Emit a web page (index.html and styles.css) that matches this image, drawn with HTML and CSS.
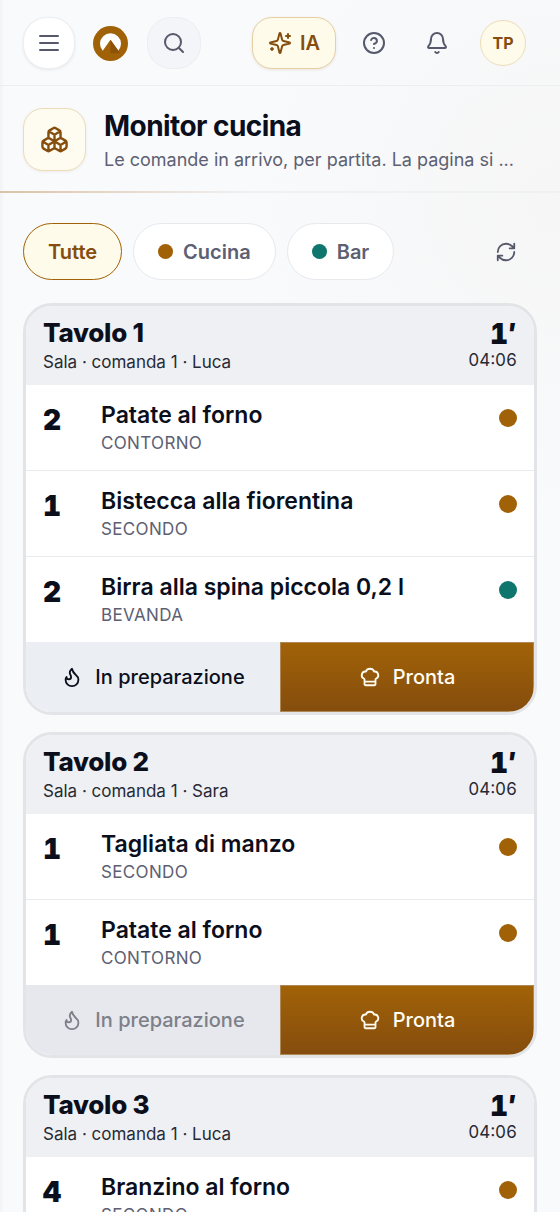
FILE: index.html
```html
<!DOCTYPE html>
<html lang="it">
<head>
<meta charset="utf-8">
<meta name="viewport" content="width=device-width, initial-scale=1">
<title>Monitor cucina</title>
<link rel="stylesheet" href="styles.css">
</head>
<body>
<svg class="sprite" aria-hidden="true">
  <symbol id="i-menu" viewBox="0 0 24 24"><path d="M3 5h18M3 12h18M3 19h18"/></symbol>
  <symbol id="i-search" viewBox="0 0 24 24"><circle cx="11" cy="11" r="8"/><path d="m21 21-4.3-4.3"/></symbol>
  <symbol id="i-sparkles" viewBox="0 0 24 24"><path d="M9.94 15.5A2 2 0 0 0 8.5 14.06l-6.14-1.58a.5.5 0 0 1 0-.96L8.5 9.94A2 2 0 0 0 9.94 8.5l1.58-6.14a.5.5 0 0 1 .96 0l1.58 6.14a2 2 0 0 0 1.44 1.44l6.14 1.58a.5.5 0 0 1 0 .96l-6.14 1.58a2 2 0 0 0-1.44 1.44l-1.58 6.14a.5.5 0 0 1-.96 0zM20 3v4M22 5h-4M4 17v2M5 18H3"/></symbol>
  <symbol id="i-help" viewBox="0 0 24 24"><circle cx="12" cy="12" r="10"/><path d="M9.09 9a3 3 0 0 1 5.83 1c0 2-3 3-3 3M12 17h.01"/></symbol>
  <symbol id="i-bell" viewBox="0 0 24 24"><path d="M10.27 21a2 2 0 0 0 3.46 0M3.26 15.33A1 1 0 0 0 4 17h16a1 1 0 0 0 .74-1.67C19.41 13.96 18 12.5 18 8A6 6 0 0 0 6 8c0 4.5-1.41 5.96-2.74 7.33"/></symbol>
  <symbol id="i-boxes" viewBox="0 0 24 24"><path d="M2.97 12.92A2 2 0 0 0 2 14.63v3.24a2 2 0 0 0 .97 1.71l3 1.8a2 2 0 0 0 2.06 0L12 19v-5.5l-5-3-4.03 2.42ZM7 16.5l-4.74-2.85M7 16.5l5-3M7 16.5v5.17M12 13.5V19l3.97 2.38a2 2 0 0 0 2.06 0l3-1.8a2 2 0 0 0 .97-1.71v-3.24a2 2 0 0 0-.97-1.71L17 10.5l-5 3ZM17 16.5l-5-3M17 16.5l4.74-2.85M17 16.5v5.17M7.97 4.42A2 2 0 0 0 7 6.13v4.37l5 3 5-3V6.13a2 2 0 0 0-.97-1.71l-3-1.8a2 2 0 0 0-2.06 0l-3 1.8ZM12 8 7.26 5.15M12 8l4.74-2.85M12 13.5V8"/></symbol>
  <symbol id="i-refresh" viewBox="0 0 24 24"><path d="M3 12a9 9 0 0 1 9-9 9.75 9.75 0 0 1 6.74 2.74L21 8M21 3v5h-5M21 12a9 9 0 0 1-9 9 9.75 9.75 0 0 1-6.74-2.74L3 16M8 16H3v5"/></symbol>
  <symbol id="i-flame" viewBox="0 0 24 24"><path d="M8.5 14.5A2.5 2.5 0 0 0 11 12c0-1.38-.5-2-1-3-1.07-2.14-.22-4.05 2-6 .5 2.5 2 4.9 4 6.5s3 3.5 3 5.5a7 7 0 1 1-14 0c0-1.15.43-2.29 1-3a2.5 2.5 0 0 0 2.5 2.5z"/></symbol>
  <symbol id="i-chef" viewBox="0 0 24 24"><path d="M17 21a1 1 0 0 0 1-1v-5.35c0-.46.32-.84.73-1.04a4 4 0 0 0-2.13-7.59 5 5 0 0 0-9.2 0 4 4 0 0 0-2.13 7.59c.41.2.73.58.73 1.04V20a1 1 0 0 0 1 1ZM6 17h12"/></symbol>
</svg>

<header class="topbar">
  <button class="round-btn menu" type="button" aria-label="Menu"><svg class="icon"><use href="#i-menu"/></svg></button>
  <a class="logo" href="#" aria-label="Home">
    <svg viewBox="0 0 36 36"><circle cx="18" cy="18" r="18" fill="#a16207"/><path d="M10 25.5a10.8 10.8 0 1 1 16 0L18 14.2Z" fill="#fff"/><path d="M18 14.2 28 28H18Z" fill="#8c5208"/></svg>
  </a>
  <button class="round-btn search" type="button" aria-label="Cerca"><svg class="icon"><use href="#i-search"/></svg></button>
  <div class="tools">
    <button class="ai-btn" type="button"><svg class="icon"><use href="#i-sparkles"/></svg>IA</button>
    <button class="plain-btn" type="button" aria-label="Aiuto"><svg class="icon"><use href="#i-help"/></svg></button>
    <button class="plain-btn" type="button" aria-label="Notifiche"><svg class="icon"><use href="#i-bell"/></svg></button>
    <button class="avatar" type="button">TP</button>
  </div>
</header>

<section class="page-head">
  <div class="tile"><svg class="icon"><use href="#i-boxes"/></svg></div>
  <div class="page-text">
    <h1>Monitor cucina</h1>
    <p>Le comande in arrivo, per partita. La pagina si ...</p>
  </div>
</section>

<main>
  <nav class="filters" aria-label="Partite">
    <button class="pill active" type="button">Tutte</button>
    <button class="pill" type="button"><span class="dot"></span>Cucina</button>
    <button class="pill" type="button"><span class="dot bar"></span>Bar</button>
    <button class="refresh" type="button" aria-label="Aggiorna"><svg class="icon"><use href="#i-refresh"/></svg></button>
  </nav>

  <article class="card">
    <header class="card-head">
      <div><h2>Tavolo 1</h2><p>Sala · comanda 1 · Luca</p></div>
      <div class="timer"><strong>1′</strong><time>04:06</time></div>
    </header>
    <ul>
      <li><span class="qty">2</span><div class="item"><h3>Patate al forno</h3><p>CONTORNO</p></div><span class="dot"></span></li>
      <li><span class="qty">1</span><div class="item"><h3>Bistecca alla fiorentina</h3><p>SECONDO</p></div><span class="dot"></span></li>
      <li><span class="qty">2</span><div class="item"><h3>Birra alla spina piccola 0,2 l</h3><p>BEVANDA</p></div><span class="dot bar"></span></li>
    </ul>
    <footer class="actions">
      <button class="prep" type="button"><svg class="icon"><use href="#i-flame"/></svg>In preparazione</button>
      <button class="ready" type="button"><svg class="icon"><use href="#i-chef"/></svg>Pronta</button>
    </footer>
  </article>

  <article class="card">
    <header class="card-head">
      <div><h2>Tavolo 2</h2><p>Sala · comanda 1 · Sara</p></div>
      <div class="timer"><strong>1′</strong><time>04:06</time></div>
    </header>
    <ul>
      <li><span class="qty">1</span><div class="item"><h3>Tagliata di manzo</h3><p>SECONDO</p></div><span class="dot"></span></li>
      <li><span class="qty">1</span><div class="item"><h3>Patate al forno</h3><p>CONTORNO</p></div><span class="dot"></span></li>
    </ul>
    <footer class="actions">
      <button class="prep" type="button" disabled><svg class="icon"><use href="#i-flame"/></svg>In preparazione</button>
      <button class="ready" type="button"><svg class="icon"><use href="#i-chef"/></svg>Pronta</button>
    </footer>
  </article>

  <article class="card">
    <header class="card-head">
      <div><h2>Tavolo 3</h2><p>Sala · comanda 1 · Luca</p></div>
      <div class="timer"><strong>1′</strong><time>04:06</time></div>
    </header>
    <ul>
      <li><span class="qty">4</span><div class="item"><h3>Branzino al forno</h3><p>SECONDO</p></div><span class="dot"></span></li>
    </ul>
    <footer class="actions">
      <button class="prep" type="button"><svg class="icon"><use href="#i-flame"/></svg>In preparazione</button>
      <button class="ready" type="button"><svg class="icon"><use href="#i-chef"/></svg>Pronta</button>
    </footer>
  </article>
</main>
</body>
</html>
```
FILE: styles.css
```css
* { box-sizing: border-box; margin: 0; padding: 0; }

html { scrollbar-width: none; }

body {
  font-family: Inter, "Liberation Sans", sans-serif;
  color: #0b0f1c;
  background:
    linear-gradient(90deg, #f2f3f5, rgba(242, 243, 245, 0) 4px),
    radial-gradient(circle at 100% 200px, #f6f6f6 0, rgba(246, 246, 246, 0) 320px),
    #f9fafc;
}

button { font: inherit; color: inherit; background: none; border: 0; cursor: pointer; }
button:disabled { cursor: default; }

.sprite { position: absolute; width: 0; height: 0; }

.icon {
  flex: none;
  width: 24px;
  height: 24px;
  fill: none;
  stroke: currentColor;
  stroke-width: 2;
  stroke-linecap: round;
  stroke-linejoin: round;
}

.topbar {
  display: flex;
  align-items: center;
  padding: 17px 34px 16px 23px;
  border-bottom: 1px solid #eceef1;
  color: #56596b;
}

.round-btn {
  display: grid;
  place-items: center;
  width: 52px;
  height: 52px;
  border: 1px solid #eceef2;
  border-radius: 24px;
}
.menu { background: #fff; box-shadow: 0 1px 3px rgba(15, 23, 42, .08); }
.search { width: 54px; background: #f4f5f9; }

.logo { width: 35px; height: 35px; margin: 0 19px 0 18px; }
.logo svg { display: block; width: 100%; height: 100%; }

.tools { display: flex; align-items: center; margin-left: auto; }

.ai-btn {
  display: flex;
  align-items: center;
  gap: 8px;
  height: 52px;
  padding: 0 15px;
  border: 1px solid #e6cfa5;
  border-radius: 20px;
  background: #fefbea;
  color: #854d0e;
  font-size: 20px;
  font-weight: 600;
  box-shadow: 0 1px 3px rgba(133, 77, 14, .12);
}
.plain-btn { display: grid; place-items: center; width: 51px; height: 51px; margin-left: 12px; }

.avatar {
  width: 46px;
  height: 46px;
  margin-left: 18px;
  border: 1px solid #ecdcb8;
  border-radius: 50%;
  background: #fefbea;
  color: #854d0e;
  font-size: 16px;
  font-weight: 700;
}

.page-head {
  display: flex;
  align-items: flex-start;
  gap: 18px;
  padding: 22px 23px 15px;
  border-bottom: 2px solid;
  border-image: linear-gradient(90deg, #d9c2a6, #e8ddd2 25%, #f0f1f3 45%) 1;
}
.tile {
  display: grid;
  flex: none;
  place-items: center;
  width: 63px;
  height: 63px;
  border: 1px solid #ecdcb8;
  border-radius: 20px;
  background: #fefcf1;
  color: #854d0e;
  box-shadow: 0 1px 3px rgba(133, 77, 14, .08);
}
.tile .icon { width: 29px; height: 29px; }
.page-text { flex: 1; min-width: 0; }
.page-text h1 { font-size: 28px; font-weight: 700; line-height: 36px; letter-spacing: -0.02em; }
.page-text p {
  overflow: hidden;
  color: #5d6072;
  font-size: 18px;
  line-height: 32px;
  text-overflow: ellipsis;
  white-space: nowrap;
}

main { display: flex; flex-direction: column; gap: 17px; padding: 30px 23px; }

.filters { display: flex; align-items: center; gap: 11px; margin-bottom: 6px; }
.pill {
  display: flex;
  align-items: center;
  gap: 10px;
  height: 57px;
  padding: 0 24px;
  border: 1px solid #e7e9ed;
  border-radius: 29px;
  background: #fff;
  color: #5d6072;
  font-size: 20px;
  font-weight: 600;
}
.pill.active { border-color: #a16207; background: #fefbea; color: #854d0e; }
.refresh { display: grid; place-items: center; width: 40px; height: 40px; margin: 0 11px 0 auto; color: #56596b; }
.refresh .icon { width: 22px; height: 22px; }

.dot { flex: none; width: 15px; height: 15px; border-radius: 50%; background: #a16207; }
.dot.bar { background: #0f766e; }

.card {
  overflow: hidden;
  border: 3px solid #e2e4e8;
  border-radius: 29px;
  background: #fff;
}
.card-head {
  display: flex;
  justify-content: space-between;
  padding: 11px 17px 10px;
  background: #eff0f4;
}
.card-head h2 { font-size: 26px; font-weight: 800; line-height: 32px; letter-spacing: -0.01em; }
.card-head p { color: #272a35; font-size: 17px; line-height: 26px; }
.timer { display: flex; flex-direction: column; text-align: right; font-variant-numeric: tabular-nums; }
.timer strong { font-size: 28px; font-weight: 900; line-height: 34px; }
.timer time { color: #272a35; font-size: 17px; line-height: 18px; }

.card ul { list-style: none; }
.card li {
  display: flex;
  padding: 15px 17px 14px;
  border-bottom: 1px solid #e9ebef;
}
.card li:last-child { border-bottom: 0; }
.qty {
  width: 58px;
  font-size: 28px;
  font-weight: 900;
  font-variant-numeric: tabular-nums;
  line-height: 40px;
}
.item { flex: 1; min-width: 0; }
.item h3 { font-size: 23px; font-weight: 600; line-height: 31px; }
.item p { color: #5d6072; font-size: 17px; line-height: 25px; letter-spacing: .02em; }
.card li .dot { width: 18px; height: 18px; margin-top: 9px; }

.actions { display: grid; grid-template-columns: 1fr 1fr; }
.actions button {
  display: flex;
  align-items: center;
  justify-content: center;
  gap: 12px;
  height: 70px;
  font-size: 20px;
  font-weight: 500;
}
.actions .icon { width: 22px; height: 22px; }
.prep { background: #ebeef2; }
.prep:disabled { background: #e6e8ee; color: #7d8088; }
.actions .ready {
  border: 1px solid #b08a56;
  background: linear-gradient(#a16207, #854d0e);
  color: #fffdf2;
}
```
